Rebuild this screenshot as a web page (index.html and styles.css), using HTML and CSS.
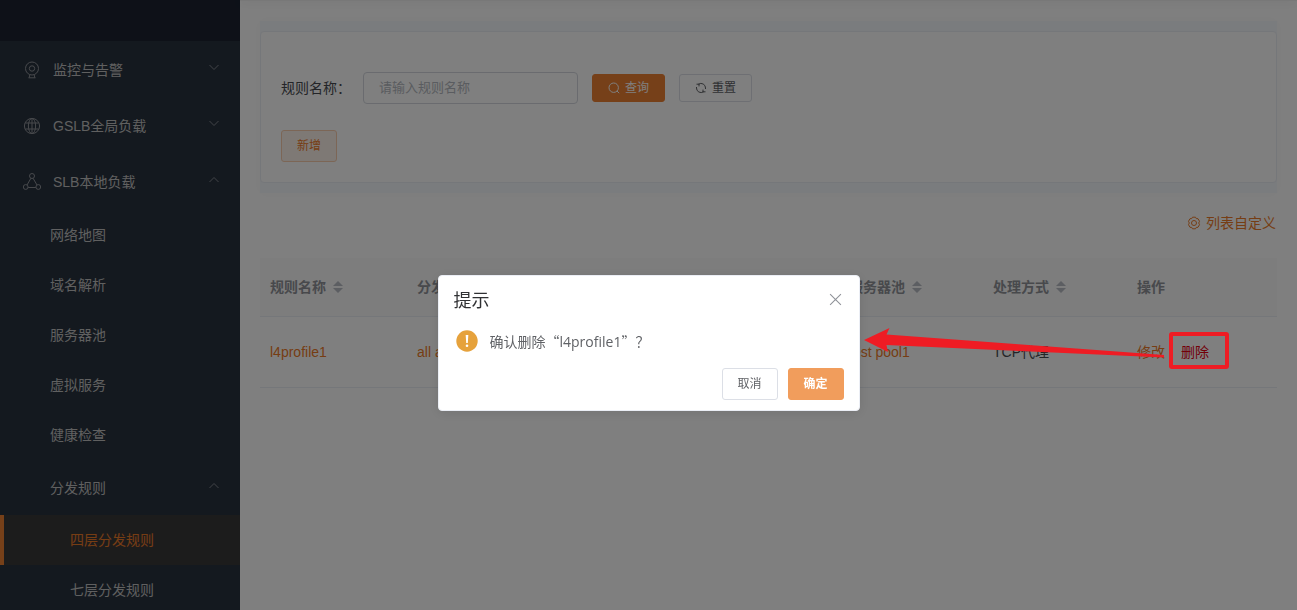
FILE: index.html
```
<!DOCTYPE html>
<html lang="zh-CN">
<head>
<meta charset="utf-8">
<title>四层分发规则</title>
<link rel="stylesheet" href="styles.css">
</head>
<body>
<div class="app">
  <aside class="sidebar">
    <div class="brand"></div>
    <nav>
      <a class="item top" href="#">
        <svg class="ico" viewBox="0 0 18 18"><circle cx="9" cy="7.5" r="6.5"/><circle cx="9" cy="7.5" r="2.7"/><path d="M6.8 13.7l-.6 3M11.2 13.7l.6 3M5.5 16.8h7"/></svg>
        <span>监控与告警</span>
        <svg class="chev" viewBox="0 0 12 12"><path d="M1.5 3l4.5 4.5L10.5 3"/></svg>
      </a>
      <a class="item top" href="#">
        <svg class="ico" viewBox="0 0 18 18"><circle cx="9" cy="9" r="7.6"/><ellipse cx="9" cy="9" rx="3.6" ry="7.6"/><path d="M9 1.4v15.2M2.3 6h13.4M2.3 12h13.4"/></svg>
        <span>GSLB全局负载</span>
        <svg class="chev" viewBox="0 0 12 12"><path d="M1.5 3l4.5 4.5L10.5 3"/></svg>
      </a>
      <a class="item top" href="#">
        <svg class="ico" viewBox="0 0 18 18"><circle cx="9" cy="3" r="2.5"/><circle cx="2.7" cy="14" r="2.4"/><circle cx="15.3" cy="14" r="2.4"/><path d="M7.9 5.3L4 12M10.1 5.3L14 12M5.2 14.5h7.6"/></svg>
        <span>SLB本地负载</span>
        <svg class="chev" viewBox="0 0 12 12"><path d="M1.5 8L6 3.500 10.500 8"/></svg>
      </a>
      <a class="item sub" href="#">网络地图</a>
      <a class="item sub" href="#">域名解析</a>
      <a class="item sub" href="#">服务器池</a>
      <a class="item sub" href="#">虚拟服务</a>
      <a class="item sub" href="#">健康检查</a>
      <a class="item group" href="#">
        <span>分发规则</span>
        <svg class="chev" viewBox="0 0 12 12"><path d="M1.5 8L6 3.5 10.5 8"/></svg>
      </a>
      <a class="item leaf active" href="#">四层分发规则</a>
      <a class="item leaf" href="#">七层分发规则</a>
    </nav>
  </aside>
  <main class="main">
    <div class="topbar"></div>
    <section class="search-wrap">
      <form class="search">
        <div class="row">
          <label for="name">规则名称：</label>
          <input id="name" type="text" placeholder="请输入规则名称">
          <button type="button" class="btn primary">
            <svg viewBox="0 0 12 12"><circle cx="5.7" cy="5.700" r="4.7"/><path d="M9 9l2.200 2.200"/></svg>查询
          </button>
          <button type="button" class="btn">
            <svg viewBox="0 0 12 12"><path d="M3.500 2.200A4.500 4.500 0 0 1 10.500 6v1M8.500 9.800A4.500 4.500 0 0 1 1.500 6V5M1.500 2.200h2.800M4 4.400V1.800M10.500 9.800H7.700M8 7.600v2.600"/></svg>重置
          </button>
        </div>
        <button type="button" class="btn add">新增</button>
      </form>
    </section>
    <div class="tools">
      <a href="#"><svg viewBox="0 0 14 14"><path d="M5.5 1.2h3l.8 1.400 1.700.1 1.500 2.600-.8 1.700.8 1.700-1.500 2.600-1.700.1-.8 1.400h-3l-.8-1.400-1.700-.1-1.500-2.600.8-1.700-.8-1.700L3 2.700l1.700-.1z"/><circle cx="7" cy="7" r="2.500"/></svg>列表自定义</a>
    </div>
    <table class="grid">
      <thead>
        <tr>
          <th class="first">规则名称<i class="sort"></i></th>
          <th>分发<i class="sort"></i></th>
          <th></th>
          <th></th>
          <th>服务器池<i class="sort"></i></th>
          <th>处理方式<i class="sort"></i></th>
          <th class="ops">操作</th>
        </tr>
      </thead>
      <tbody>
        <tr>
          <td><a href="#">l4profile1</a></td>
          <td><a href="#">all any</a></td>
          <td></td>
          <td></td>
          <td><a href="#">test pool1</a></td>
          <td>TCP代理</td>
          <td class="ops"><a href="#">修改</a><a href="#" class="danger">删除</a></td>
        </tr>
      </tbody>
    </table>
  </main>
</div>

<div class="mask">
  <div class="dialog" role="dialog" aria-labelledby="dlg-title">
    <header>
      <h2 id="dlg-title">提示</h2>
      <button type="button" class="close" aria-label="关闭"><svg viewBox="0 0 12 12"><path d="M1 1l10 10M11 1L1 11"/></svg></button>
    </header>
    <div class="message">
      <svg class="warn" viewBox="0 0 22 22"><circle cx="11" cy="11" r="10.7" fill="#e6a23c"/><path d="M9.700 5h2.600l-.5 8h-1.600z" fill="#fff"/><circle cx="11" cy="15.800" r="1.300" fill="#fff"/></svg>
      <p>确认删除“<span>l4profile1</span>”？</p>
    </div>
    <footer>
      <button type="button" class="btn">取消</button>
      <button type="button" class="btn confirm">确定</button>
    </footer>
  </div>
</div>

<svg class="note" width="366" height="42" viewBox="0 0 366 42">
  <path d="M0 12L25.500 0 22.500 6.500 300 27v2.500L22.500 17 24 24z" fill="#ee1c24"/>
  <rect x="307" y="6" width="56" height="33" rx="1" fill="none" stroke="#ee1c24" stroke-width="4"/>
</svg>
</body>
</html>
```
FILE: styles.css
```
* { box-sizing: border-box; }
html, body { height: 100%; }
body {
  margin: 0;
  overflow: hidden;
  background: #fff;
  color: #303133;
  font: 14px/20px "Liberation Sans", "Noto Sans CJK SC", sans-serif;
}
a { text-decoration: none; color: #ed7b29; }
svg { fill: none; stroke: currentColor; flex: none; }
button, input { font: inherit; }

.app { display: flex; height: 100%; }

.sidebar {
  flex: none;
  width: 240px;
  overflow: hidden;
  background: #28323f;
}
.brand { height: 41px; background: #1c2331; }
.item {
  display: flex;
  align-items: center;
  height: 50px;
  padding: 2px 20px 0 50px;
  color: #c0c0c0;
}
.item.top, .item.group { height: 56px; }
.item.top { padding-left: 23px; }
.item.leaf { padding-top: 0; padding-left: 70px; }
.item.leaf.active {
  padding-left: 66px;
  border-left: 4px solid #ed8133;
  background: #393939;
  color: #ed7b29;
}
.ico { width: 18px; height: 18px; margin-right: 12px; color: #909399; }
.chev { width: 12px; height: 12px; margin: 0 0 4px auto; color: #848890; }

.main {
  flex: 1;
  min-width: 0;
  padding: 0 20px;
}
.topbar {
  height: 1px;
  margin: 0 -20px 20px;
  background: #f0f0f0;
  box-shadow: 0 1px 8px rgba(0, 0, 0, .25);
}
.search-wrap { padding: 10px 0; background: #f5f8fc; box-shadow: 0 0 12px rgba(0, 0, 0, .03); }
.search {
  min-height: 152px;
  padding: 40px 20px 20px;
  border: 1px solid #ebeef5;
  border-radius: 4px;
  background: #fff;
}
.row { display: flex; align-items: center; }
.row label { width: 82px; color: #484b50; }
.row input {
  width: 215px;
  height: 32px;
  margin-right: 14px;
  padding: 0 15px 2px;
  border: 1px solid #d4d7de;
  border-radius: 4px;
  background: #fff;
  font-size: 13px;
}
.row input::placeholder { color: #b4b8c0; }
.btn {
  display: inline-flex;
  align-items: center;
  justify-content: center;
  width: 56px;
  height: 32px;
  padding: 0;
  border: 1px solid #dcdfe6;
  border-radius: 3px;
  background: #fff;
  color: #606266;
  font-size: 12px;
  line-height: 16px;
}
.row .btn {
  width: 73px;
  height: 28px;
  margin-right: 14px;
  gap: 5px;
}
.btn svg { width: 12px; height: 12px; }
.btn.primary { border-color: #ed8133; background: #ed8133; color: #fff; }
.btn.add {
  margin-top: 26px;
  border-color: #f8cdad;
  background: #fdf2eb;
  color: #ed7b29;
}

.tools {
  display: flex;
  justify-content: flex-end;
  padding: 20px 1px 25px;
}
.tools a { display: flex; align-items: center; gap: 5px; }
.tools svg { width: 14px; height: 14px; }

.grid {
  width: 100%;
  border-collapse: collapse;
  table-layout: fixed;
  color: #484b50;
}
.grid th, .grid td {
  padding: 0 10px;
  border-bottom: 1px solid #ebeef5;
  text-align: left;
}
.grid th { height: 58px; background: #fafafa; color: #909399; white-space: nowrap; }
.grid td { height: 71px; }
.grid .first { width: 147px; }
.grid .ops { width: 150px; }
.grid .danger { margin-left: 16px; color: #e60012; }
.sort {
  display: inline-flex;
  flex-direction: column;
  gap: 2px;
  margin-left: 7px;
  padding-bottom: 2px;
  vertical-align: middle;
}
.sort::before, .sort::after {
  content: "";
  border: 5px solid transparent;
  border-top-width: 0;
  border-bottom-color: #b8bcc4;
}
.sort::after {
  border-width: 5px 5px 0;
  border-top-color: #b8bcc4;
}

.mask {
  position: fixed;
  inset: 0;
  display: flex;
  align-items: flex-start;
  justify-content: center;
  padding-top: 275px;
  background: rgba(0, 0, 0, .5);
}
.dialog {
  width: 422px;
  padding-bottom: 10px;
  border: 1px solid #ebeef5;
  border-radius: 4px;
  background: #fff;
  box-shadow: 0 2px 12px rgba(0, 0, 0, .1);
}
.dialog header {
  display: flex;
  align-items: flex-start;
  justify-content: space-between;
  padding: 15px 15px 10px;
}
.dialog h2 { margin: 0; font-size: 18px; font-weight: 400; line-height: 20px; }
.close {
  display: flex;
  padding: 2px;
  border: 0;
  background: none;
  color: #909399;
}
.close svg { width: 13px; height: 13px; }
.message {
  display: flex;
  align-items: center;
  gap: 12px;
  padding: 9px 17px;
}
.message p {
  margin: 0;
  color: #606266;
  font-family: "Noto Sans CJK SC", sans-serif;
}
.message span { font-family: "Open Sans", sans-serif; }
.warn { width: 22px; height: 22px; stroke: none; }
.dialog footer {
  display: flex;
  justify-content: flex-end;
  gap: 10px;
  padding: 7px 15px 0;
}
.btn.confirm { border-color: #f19d5c; background: #f19d5c; color: #fff; font-weight: 700; }

.note {
  position: absolute;
  top: 328px;
  right: 67px;
  stroke: none;
}
```
